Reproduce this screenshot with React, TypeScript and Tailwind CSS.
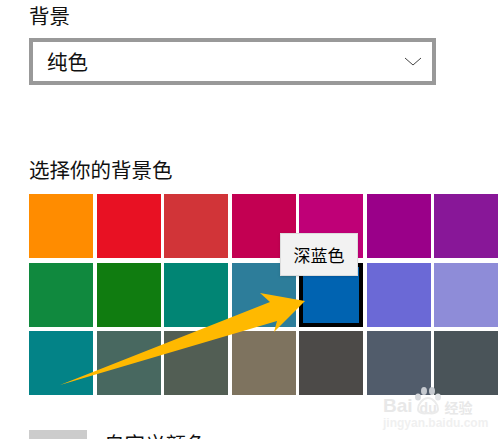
const rows = [
  ["#ff8c00", "#e81123", "#d13438", "#c30052", "#bf0077", "#9a0089", "#881798"],
  ["#10893e", "#107c10", "#018574", "#2d7d9a", "#0063b1", "#6b69d6", "#8e8cd8"],
  ["#038387", "#486860", "#525e54", "#7e735f", "#4c4a48", "#515c6b", "#4a5459"],
];

export default function App() {
  return (
    <div className="relative w-[500px] h-[439px] overflow-hidden bg-white text-[#111] font-['Noto_Sans_CJK_SC',sans-serif]">
      <div className="pl-[29px]">
        <div className="text-[20.5px] leading-[30px] h-[38px]">背景</div>
        <div className="w-[407px] h-[47px] border-4 border-[#999999] flex items-center justify-between pl-[14px] pr-[10px] text-[20.5px]">
          <span>纯色</span>
          <svg width="18" height="10" viewBox="0 0 18 10" fill="none" stroke="#444" strokeWidth="1"><path d="M1 1l8 7 8-7" /></svg>
        </div>
        <div className="mt-[70px] text-[20.5px] leading-[28px]">选择你的背景色</div>
        <div className="mt-[11px] flex flex-col gap-[4.5px]">
          {rows.map((r, i) => (
            <div key={i} className="flex gap-[3.5px]">
              {r.map((c, j) => (
                <div key={j} className={`w-[64px] h-[64px] ${i === 1 && j === 4 ? "border-4 border-black" : ""}`} style={{ backgroundColor: c }} />
              ))}
            </div>
          ))}
        </div>
        <div className="mt-[35px] flex items-start gap-[17px]">
          <div className="w-[58px] h-[40px] bg-[#cccccc]" />
          <div className="text-[20.5px] leading-[28px] -mt-[1px]">自定义颜色</div>
        </div>
      </div>
      <div className="absolute left-[280px] top-[233px] w-[78px] h-[43px] bg-[#f2f2f2] border border-[#dcdcdc] shadow-sm flex items-center justify-center text-[17px] text-black">深蓝色</div>
      <svg className="absolute left-0 top-0" width="500" height="439" viewBox="0 0 500 439">
        <polygon points="60,385 270,302 260,293 305,301 274,332 277,321" fill="#ffb900" />
      </svg>
      <div className="absolute left-[383px] top-[385px] w-[92px] flex flex-col">
        <div className="flex items-end h-[31px] text-[#e8e8e8] font-bold">
          <span className="text-[19px] leading-[20px] font-['Liberation_Sans',sans-serif]">Bai</span>
          <span className="relative text-[14px] leading-[16px] pl-[7px] w-[32px] font-['Liberation_Sans',sans-serif]">
            du
            <svg className="absolute left-0 -top-[15px]" width="32" height="32" viewBox="0 0 32 32">
              <ellipse cx="11" cy="6" rx="3" ry="4" fill="#c6cad0" />
              <ellipse cx="19" cy="6" rx="3" ry="4" fill="#c6cad0" />
              <ellipse cx="5" cy="12" rx="3" ry="3.5" fill="#d8dade" />
              <ellipse cx="25" cy="12" rx="3" ry="3.5" fill="#e3e5e8" />
              <path d="M15 13c-5 0-10 6-10 11 0 4 5 5 10 4 5 1 10 0 10-4 0-5-5-11-10-11z" fill="none" stroke="#ebebeb" strokeWidth="2" />
            </svg>
          </span>
          <span className="text-[14px] leading-[18px]">经验</span>
        </div>
        <div className="text-[#f0f0f0] text-[12px] font-bold leading-[12px] pt-[1px] font-['Liberation_Sans',sans-serif]">jingyan.baidu.com</div>
      </div>
    </div>
  );
}
